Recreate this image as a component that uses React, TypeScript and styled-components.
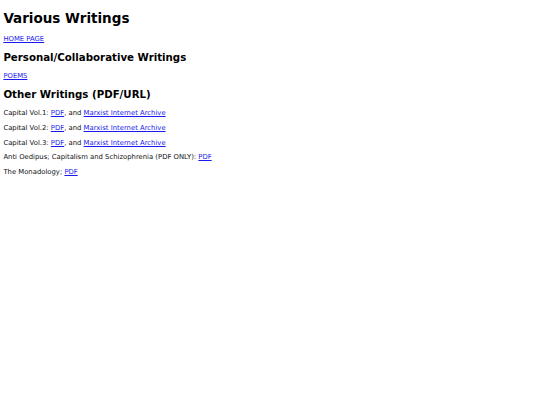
import React from "react";
import styled, { createGlobalStyle } from "styled-components";

const S = 0.421875;

const Global = createGlobalStyle`
  html, body { background: #fff; }
  body {
    margin: ${8 * S}px;
    font-family: "DejaVu Sans", Verdana, sans-serif;
    font-size: 6.85px;
    color: #111;
  }
`;

const Page = styled.div`
  display: block;
`;

const Title = styled.h1`
  font-size: ${32 * S}px;
  font-weight: bold;
  color: #000;
  margin: ${32 * 0.67 * S - 2}px 0 ${32 * 0.67 * S}px;
`;

const Section = styled.h2`
  font-size: ${24 * S + 0.1}px;
  font-weight: bold;
  color: #000;
  margin: ${24 * 0.83 * S}px 0 ${24 * 0.83 * S + 1}px;
`;

const Para = styled.p`
  margin: ${16 * S}px 0;
`;

const Link = styled.a`
  color: #1a1aee;
  text-decoration: underline;
`;

const items: { label: string; links: { text: string; sep?: string }[] }[] = [
  { label: "Capital Vol.1: ", links: [{ text: "PDF" }, { text: "Marxist Internet Archive", sep: ", and " }] },
  { label: "Capital Vol.2: ", links: [{ text: "PDF" }, { text: "Marxist Internet Archive", sep: ", and " }] },
  { label: "Capital Vol.3: ", links: [{ text: "PDF" }, { text: "Marxist Internet Archive", sep: ", and " }] },
  { label: "Anti Oedipus; Capitalism and Schizophrenia (PDF ONLY): ", links: [{ text: "PDF" }] },
  { label: "The Monadology; ", links: [{ text: "PDF" }] },
];

export default function App() {
  return (
    <Page>
      <Global />
      <Title>Various Writings</Title>
      <Para>
        <Link href="#">HOME PAGE</Link>
      </Para>
      <Section>Personal/Collaborative Writings</Section>
      <Para>
        <Link href="#">POEMS</Link>
      </Para>
      <Section>Other Writings (PDF/URL)</Section>
      {items.map((it, i) => (
        <Para key={i}>
          {it.label}
          {it.links.map((l, j) => (
            <React.Fragment key={j}>
              {l.sep}
              <Link href="#">{l.text}</Link>
            </React.Fragment>
          ))}
        </Para>
      ))}
    </Page>
  );
}
